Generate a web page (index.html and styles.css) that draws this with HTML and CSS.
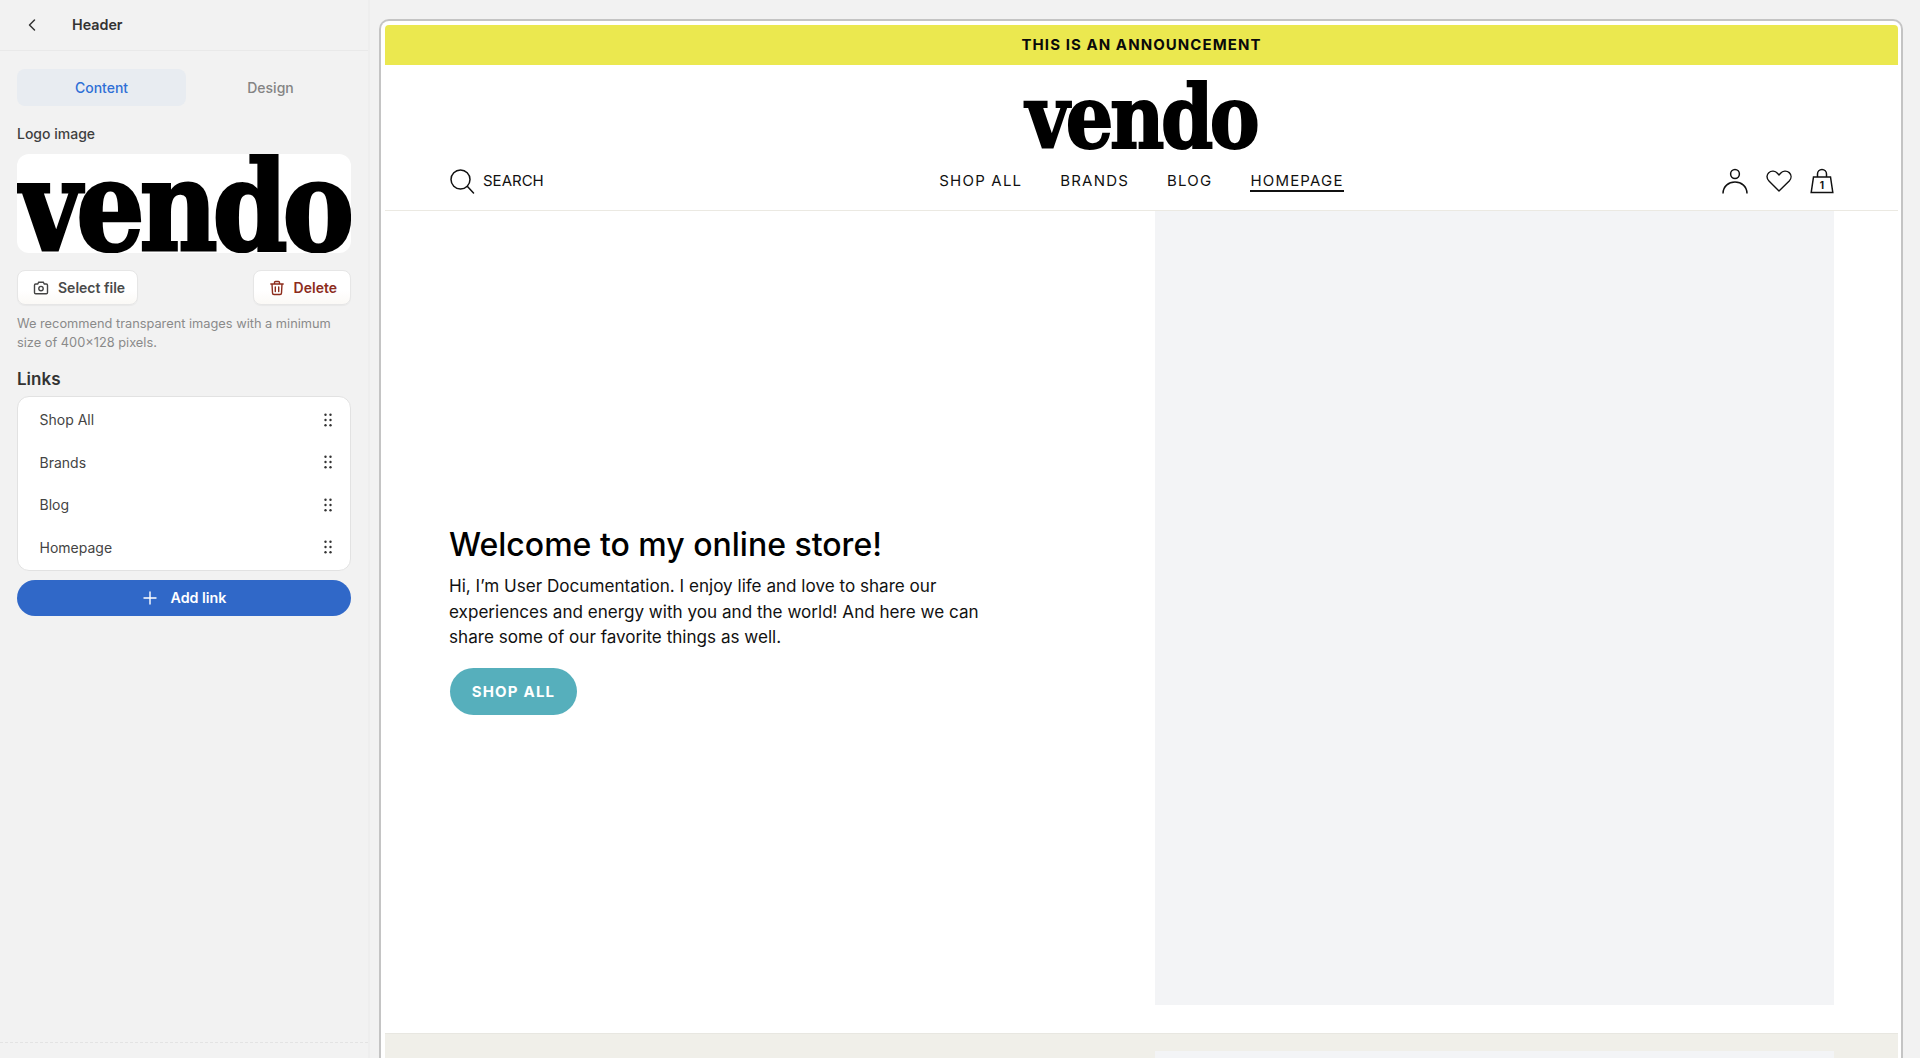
FILE: index.html
```html
<!DOCTYPE html>
<html lang="en">
<head>
<meta charset="utf-8">
<title>Header</title>
<link rel="stylesheet" href="styles.css">
</head>
<body>
<div class="app">
  <aside class="sidebar">
    <div class="side-head">
      <svg class="back" viewBox="0 0 10 14" width="10" height="14"><path d="M7.5 2 2.5 7l5 5" fill="none" stroke="#333" stroke-width="1.5" stroke-linecap="round" stroke-linejoin="round"/></svg>
      <span class="side-title">Header</span>
    </div>
    <div class="side-body">
      <div class="tabs">
        <div class="tab tab-active">Content</div>
        <div class="tab">Design</div>
      </div>
      <div class="label">Logo image</div>
      <div class="logo-box"><span class="logo-text logo-large">vendo</span></div>
      <div class="file-actions">
        <button class="btn">
          <svg viewBox="0 0 18 18" width="18" height="18"><path d="M2.5 6.2c0-.7.5-1.2 1.2-1.2h2l1-1.8h4.6l1 1.8h2c.7 0 1.2.5 1.2 1.2v7.4c0 .7-.5 1.2-1.2 1.2H3.700c-.7 0-1.200-.5-1.200-1.200z" fill="none" stroke="#444" stroke-width="1.400"/><circle cx="9" cy="9.600" r="2.200" fill="none" stroke="#444" stroke-width="1.400"/></svg>
          Select file
        </button>
        <button class="btn btn-danger">
          <svg viewBox="0 0 18 18" width="18" height="18"><path d="M2.800 5h12.400M6.500 4.800V3.500c0-.7.4-1 1-1h3c.6 0 1 .3 1 1v1.300M4 5l.5 9c0 1 .7 1.500 1.500 1.500h6c.8 0 1.500-.5 1.500-1.500l.5-9M7.300 8v4.500M10.700 8v4.500" fill="none" stroke="#8c2c1c" stroke-width="1.400" stroke-linecap="round"/></svg>
          Delete
        </button>
      </div>
      <p class="help">We recommend transparent images with a minimum size of 400×128 pixels.</p>
      <h2 class="links-title">Links</h2>
      <ul class="link-list">
        <li class="link-row">Shop All<svg class="dots" viewBox="0 0 8 14" width="8" height="14"><g fill="#333"><circle cx="1.500" cy="1.800" r="1.200"/><circle cx="6.500" cy="1.800" r="1.200"/><circle cx="1.500" cy="7" r="1.200"/><circle cx="6.500" cy="7" r="1.200"/><circle cx="1.500" cy="12.200" r="1.200"/><circle cx="6.500" cy="12.200" r="1.200"/></g></svg></li>
        <li class="link-row">Brands<svg class="dots" viewBox="0 0 8 14" width="8" height="14"><g fill="#333"><circle cx="1.500" cy="1.800" r="1.200"/><circle cx="6.500" cy="1.800" r="1.200"/><circle cx="1.500" cy="7" r="1.200"/><circle cx="6.500" cy="7" r="1.200"/><circle cx="1.500" cy="12.200" r="1.200"/><circle cx="6.500" cy="12.200" r="1.200"/></g></svg></li>
        <li class="link-row">Blog<svg class="dots" viewBox="0 0 8 14" width="8" height="14"><g fill="#333"><circle cx="1.500" cy="1.800" r="1.200"/><circle cx="6.500" cy="1.800" r="1.200"/><circle cx="1.500" cy="7" r="1.200"/><circle cx="6.500" cy="7" r="1.200"/><circle cx="1.500" cy="12.200" r="1.200"/><circle cx="6.500" cy="12.200" r="1.200"/></g></svg></li>
        <li class="link-row">Homepage<svg class="dots" viewBox="0 0 8 14" width="8" height="14"><g fill="#333"><circle cx="1.500" cy="1.800" r="1.200"/><circle cx="6.500" cy="1.800" r="1.200"/><circle cx="1.500" cy="7" r="1.200"/><circle cx="6.500" cy="7" r="1.200"/><circle cx="1.500" cy="12.200" r="1.200"/><circle cx="6.500" cy="12.200" r="1.200"/></g></svg></li>
      </ul>
      <button class="add-link">
        <svg viewBox="0 0 14 14" width="14" height="14"><path d="M7 1v12M1 7h12" stroke="#fff" stroke-width="1.400" stroke-linecap="round"/></svg>
        Add link
      </button>
    </div>
    <div class="side-foot"></div>
  </aside>
  <main class="stage">
    <div class="frame">
      <div class="announce">THIS IS AN ANNOUNCEMENT</div>
      <header class="store-head">
        <div class="store-logo"><span class="logo-text logo-small">vendo</span></div>
        <div class="store-nav">
          <div class="search">
            <svg viewBox="0 0 26 26" width="26" height="26"><circle cx="11.500" cy="11.500" r="9.500" fill="none" stroke="#111" stroke-width="1.500"/><path d="m18.500 18.500 6 6.500" stroke="#111" stroke-width="1.500" stroke-linecap="round"/></svg>
            <span class="search-label">SEARCH</span>
          </div>
          <nav class="menu">
            <a class="menu-item">SHOP ALL</a>
            <a class="menu-item">BRANDS</a>
            <a class="menu-item">BLOG</a>
            <a class="menu-item menu-current">HOMEPAGE</a>
          </nav>
          <div class="icons">
            <svg viewBox="0 0 26 26" width="26" height="26"><circle cx="13" cy="6" r="4.400" fill="none" stroke="#111" stroke-width="1.500"/><path d="M1 25.500C1 18.500 6.500 14 13 14s12 4.500 12 11.500" fill="none" stroke="#111" stroke-width="1.500"/></svg>
            <svg viewBox="0 0 28 24" width="26" height="24"><path d="M14 22.700 3.200 12C.3 9 .5 5.300 3 3c2.700-2.400 7-2 9.300.6L14 5.500l1.700-1.900C18 1 22.300.6 25 3c2.500 2.300 2.700 6 0 9z" fill="none" stroke="#111" stroke-width="1.500" stroke-linejoin="round"/></svg>
            <svg viewBox="0 0 24 26" width="24" height="26"><path d="M3.500 9h17l2.300 15.500H1.200zM7.500 9V6a4.500 4.500 0 0 1 9 0v3" fill="none" stroke="#111" stroke-width="1.500"/><text x="12" y="21" text-anchor="middle" class="bag-count">1</text></svg>
          </div>
        </div>
      </header>
      <section class="hero">
        <div class="hero-text">
          <h1 class="hero-title">Welcome to my online store!</h1>
          <p class="hero-copy">Hi, I’m User Documentation. I enjoy life and love to share our experiences and energy with you and the world! And here we can share some of our favorite things as well.</p>
          <a class="hero-btn">SHOP ALL</a>
        </div>
        <div class="hero-image"></div>
      </section>
      <section class="next">
        <div class="next-image"></div>
      </section>
    </div>
  </main>
</div>
</body>
</html>
```
FILE: styles.css
```css
* { box-sizing: border-box; }
html, body { margin: 0; height: 100%; overflow: hidden; }
body { font-family: Inter, "Liberation Sans", sans-serif; background: #f2f2f2; color: #333; }
.app { display: flex; height: 1058px; }

.sidebar { width: 370px; flex: none; display: flex; flex-direction: column; border-right: 2px solid #eeeeee; }
.side-head { height: 51px; flex: none; display: flex; align-items: center; padding: 0 0 1px 27px; gap: 35px; border-bottom: 1px solid #e9e9e9; }
.side-title { font-size: 14.3px; font-weight: 600; }
.side-body { flex: 1; padding: 18px 17px 0; display: flex; flex-direction: column; }
.side-foot { height: 16px; flex: none; border-top: 1px dashed #e3e3e3; }

.tabs { display: grid; grid-template-columns: 169px 169px; height: 37px; }
.tab { display: flex; align-items: center; justify-content: center; font-size: 14px; font-weight: 500; color: #848484; border-radius: 8px; }
.tab-active { background: #e8ecf1; color: #2f6fd6; }
.label { margin-top: 19px; font-size: 14px; font-weight: 500; line-height: 18px; color: #3f3f3f; }
.logo-box { margin-top: 11px; height: 99px; background: #fff; border-radius: 12px; overflow: hidden; display: flex; justify-content: center; }

.logo-text { font-family: "DejaVu Serif", "Liberation Serif", serif; font-weight: 700; color: #000; display: block; white-space: nowrap; -webkit-text-stroke-color: #000; }
.logo-large { font-size: 125px; line-height: 99px; letter-spacing: -6px; -webkit-text-stroke-width: 3px; transform: translate(0, 3px) scaleX(.86); }
.logo-small { font-size: 87px; line-height: 69px; letter-spacing: -4px; -webkit-text-stroke-width: 2px; transform: translate(0, 2px) scaleX(.86); }

.file-actions { margin-top: 17px; display: flex; justify-content: space-between; }
.btn { height: 35px; display: flex; align-items: center; gap: 8px; padding: 0 12px 0 14px; border: 1px solid #e6e6e6; border-radius: 8px; background: linear-gradient(#fff 60%, #fbf9f6); font-family: inherit; font-size: 14px; font-weight: 600; color: #4a4a4a; box-shadow: 0 1px 1px rgba(0,0,0,.04); }
.btn-danger { color: #8c2c1c; padding: 0 13px 0 14px; }
.help { margin: 9px 0 0; font-size: 12.8px; line-height: 19px; color: #8a8a8a; }
.links-title { margin: 15.5px 0 0; font-size: 17px; line-height: 22px; font-weight: 600; color: #333; }
.link-list { list-style: none; margin: 6px 0 0; padding: 2px 0 0; height: 175px; background: #fff; border: 1px solid #e2e2e2; border-radius: 12px; }
.link-row { height: 42.5px; display: flex; align-items: center; justify-content: space-between; padding: 0 18px 0 21.5px; font-size: 14px; color: #444; }
.add-link { margin-top: 9px; height: 36px; display: flex; align-items: center; justify-content: center; gap: 13px; padding-left: 8px; border: none; border-radius: 18px; background: #3068c8; color: #fff; font-family: inherit; font-size: 14.3px; font-weight: 600; }

.stage { flex: 1; min-width: 0; height: 1058px; padding: 19px 17px 0 9px; }
.frame { height: 100%; overflow: hidden; background: #fff; border: 2px solid #c4c4c4; border-bottom: 0; border-radius: 10px 10px 0 0; padding: 4px 3px 0 4px; }
.announce { height: 40px; padding-bottom: 1px; background: #ebe84f; border-radius: 4px 4px 0 0; display: flex; align-items: center; justify-content: center; font-size: 15px; font-weight: 700; letter-spacing: 1.07px; color: #0a0a0a; }

.store-head { height: 146px; border-bottom: 1px solid #ebe9e2; display: flex; flex-direction: column; align-items: stretch; }
.store-logo { height: 85px; padding-top: 16px; display: flex; justify-content: center; }
.store-nav { display: grid; grid-template-columns: 1fr auto 1fr; align-items: center; padding: 2px 64px 0; height: 60px; color: #111; }
.search { display: flex; align-items: center; gap: 8px; font-size: 15px; }
.search-label { padding-bottom: 2px; }
.menu { display: flex; gap: 38px; }
.menu-item { font-size: 15px; letter-spacing: 1.2px; line-height: 17px; padding: 1px 0; border-bottom: 2px solid transparent; color: #111; }
.menu-current { border-bottom-color: #111; }
.icons { display: flex; align-items: center; justify-content: flex-end; gap: 18px; }
.bag-count { font-family: Inter, sans-serif; font-size: 10px; font-weight: 700; fill: #111; }

.hero { height: 822px; display: grid; grid-template-columns: 770px 679px; padding-bottom: 28px; }
.hero-text { padding: 314px 0 0 64px; }
.hero-title { margin: 0; font-size: 32px; line-height: 40px; font-weight: 500; color: #000; }
.hero-copy { margin: 8px 0 0; width: 560px; font-size: 17.1px; line-height: 25.7px; color: #111; }
.hero-btn { margin: 18px 0 0 1px; width: 127px; height: 47px; display: flex; align-items: center; justify-content: center; background: #56afbc; border-radius: 24px; color: #fff; font-size: 15px; font-weight: 700; letter-spacing: 1.2px; }
.hero-image { background: #f3f4f6; }

.next { height: 25px; background: #f0efe9; border-top: 1px solid #e8e7e1; padding: 17px 64px 0 770px; }
.next-image { height: 7px; background: #f3f4f6; }
```
